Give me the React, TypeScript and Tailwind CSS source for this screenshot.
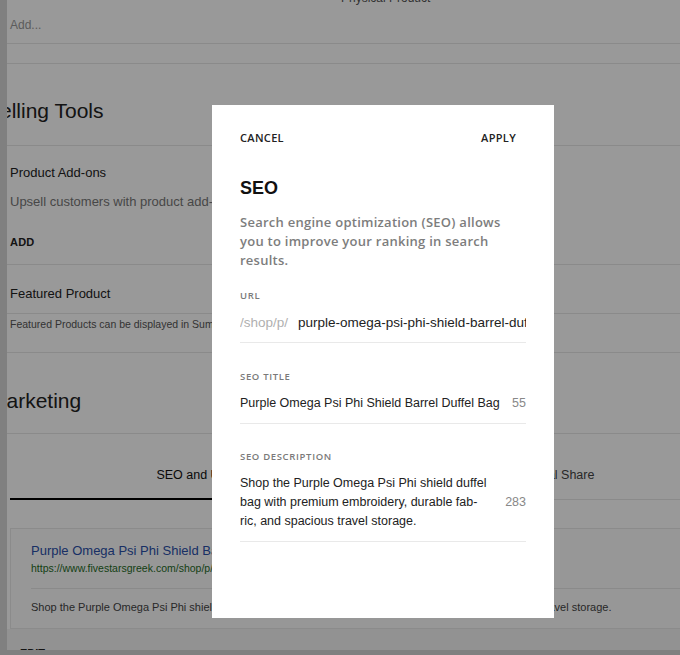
import React from 'react'

const sans = { fontFamily: '"Liberation Sans", Arial, sans-serif' }
const open = { fontFamily: '"Open Sans", sans-serif' }

function Line() {
  return <div className="h-px bg-[#e6e6e6]" />
}

function BackgroundPage() {
  return (
    <div className="absolute inset-0 pl-[7px] bg-[#d6d6d6]" style={sans}>
      <div className="h-[650px] bg-white overflow-hidden">
        {/* top block */}
        <div className="-mt-[10px] h-[53px] pl-[3px]">
          <div className="pl-[331px] text-[12px] leading-[16px] text-[#555]">Physical Product</div>
          <div className="mt-[11px] text-[12px] leading-[16px] text-[#999]">Add...</div>
        </div>
        <Line />
        <div className="h-[19px]" />
        <Line />

        {/* selling tools */}
        <div className="h-[81px] pt-[33px] -ml-[21px]">
          <h2 className="text-[21px] leading-[28px] text-[#222]">Selling Tools</h2>
        </div>
        <Line />
        <div className="pl-[3px]">
          <div className="pt-[19px] text-[13px] leading-[16px] text-[#222]">Product Add-ons</div>
          <div className="mt-[13px] text-[13px] leading-[16px] text-[#777]">Upsell customers with product add-ons to increase sales</div>
          <div className="mt-[25px] text-[11px] leading-[14px] font-bold tracking-[0.02em] text-[#222]">ADD</div>
          <div className="h-[15px]" />
        </div>
        <Line />
        <div className="pl-[3px] h-[48px] pt-[21px]">
          <div className="text-[13px] leading-[16px] text-[#222]">Featured Product</div>
        </div>
        <Line />
        <div className="pl-[3px] h-[38px] pt-[3px]">
          <div className="text-[10.5px] leading-[14px] text-[#555] whitespace-nowrap">Featured Products can be displayed in Summary Blocks and Product Blocks.</div>
        </div>
        <Line />

        {/* marketing */}
        <div className="h-[80px] pt-[34px] -ml-[18px]">
          <h2 className="text-[21px] leading-[28px] text-[#222]">Marketing</h2>
        </div>
        <Line />

        {/* tabs */}
        <div className="flex pl-[3px]">
          <div className="w-[372px] shrink-0 h-[66px] border-b-2 border-black flex items-center justify-center pt-[18px] text-[12.5px] text-[#111]">
            SEO and URL
          </div>
          <div className="w-[354px] shrink-0 h-[66px] border-b border-[#e6e6e6] flex items-center justify-center pt-[18px] text-[12.5px] text-[#444]">
            Social Share
          </div>
        </div>

        <div className="pl-[3px] pt-[28px]">
          <div className="border border-[#e8e8e8] bg-[#fcfcfc] w-[720px]">
            <div className="px-[20px] pt-[14px] pb-[13px]">
              <div className="text-[13px] leading-[16px] text-[#2a4fa8]">Purple Omega Psi Phi Shield Barrel Duffel Bag</div>
              <div className="mt-[3px] text-[10.5px] leading-[13px] text-[#1f6b1f] whitespace-nowrap">https://www.fivestarsgreek.com/shop/p/purple-omega-psi-phi-shield-barrel-duffel-bag</div>
            </div>
            <div className="mx-[20px] h-px bg-[#e6e6e6]" />
            <div className="px-[20px] pt-[11px] pb-[14px] text-[11px] leading-[14px] text-[#444] whitespace-nowrap">
              Shop the Purple Omega Psi Phi shield duffel bag with premium embroidery, durable fabric, and spacious travel storage.
            </div>
          </div>
          <div className="h-[40px] bg-[#f4f4f4] -ml-[3px] pl-[13px] pt-[17px] text-[11px] leading-[14px] font-bold text-[#222]">EDIT</div>
        </div>
      </div>
    </div>
  )
}

function Field({
  label,
  counter,
  children,
  gap,
}: {
  label: string
  counter?: string
  children: React.ReactNode
  gap: string
}) {
  return (
    <div className={gap}>
      <div className="text-[9.5px] leading-[12px] font-semibold tracking-[0.07em] text-[#7a7a7a]" style={open}>
        {label}
      </div>
      <div className="mt-[11px] pb-[10px] border-b border-[#e9e9e9] flex items-center gap-3">
        <div className="flex-1 min-w-0">{children}</div>
        {counter && <div className="text-[12.5px] text-[#888]" style={sans}>{counter}</div>}
      </div>
    </div>
  )
}

export default function App() {
  return (
    <div className="relative w-[680px] h-[655px] overflow-hidden bg-white">
      <BackgroundPage />
      <div className="absolute inset-0 bg-black/40" />

      {/* modal */}
      <div className="absolute left-[212px] top-[105px] w-[342px] h-[513px] bg-white px-[28px] pt-[26px]">
        <div className="flex justify-between text-[11px] leading-[14px] font-semibold tracking-[0.03em] text-[#222]" style={open}>
          <button>CANCEL</button>
          <button className="pr-[10px]">APPLY</button>
        </div>

        <h1 className="mt-[32px] text-[18px] leading-[22px] font-bold text-[#111]" style={sans}>SEO</h1>

        <p className="mt-[14px] text-[13px] leading-[19px] font-semibold tracking-[0.02em] text-[#7d7d7d]" style={open}>
          Search engine optimization (SEO) allows
          <br />
          you to improve your ranking in search
          <br />
          results.
        </p>

        <Field label="URL" gap="mt-[20px]">
          <div className="flex whitespace-nowrap overflow-hidden text-[13.5px] leading-[19px]" style={sans}>
            <span className="text-[#b0b0b0] mr-[10px]">/shop/p/</span>
            <span className="text-[#222]">purple-omega-psi-phi-shield-barrel-duffel-bag</span>
          </div>
        </Field>

        <Field label="SEO TITLE" counter="55" gap="mt-[28px]">
          <div className="text-[12.5px] leading-[18px] text-[#222] whitespace-nowrap" style={sans}>
            Purple Omega Psi Phi Shield Barrel Duffel Bag
          </div>
        </Field>

        <Field label="SEO DESCRIPTION" counter="283" gap="mt-[27px]">
          <div className="text-[12.5px] leading-[19px] text-[#222] whitespace-nowrap" style={sans}>
            Shop the Purple Omega Psi Phi shield duffel
            <br />
            bag with premium embroidery, durable fab-
            <br />
            ric, and spacious travel storage.
          </div>
        </Field>
      </div>
    </div>
  )
}
